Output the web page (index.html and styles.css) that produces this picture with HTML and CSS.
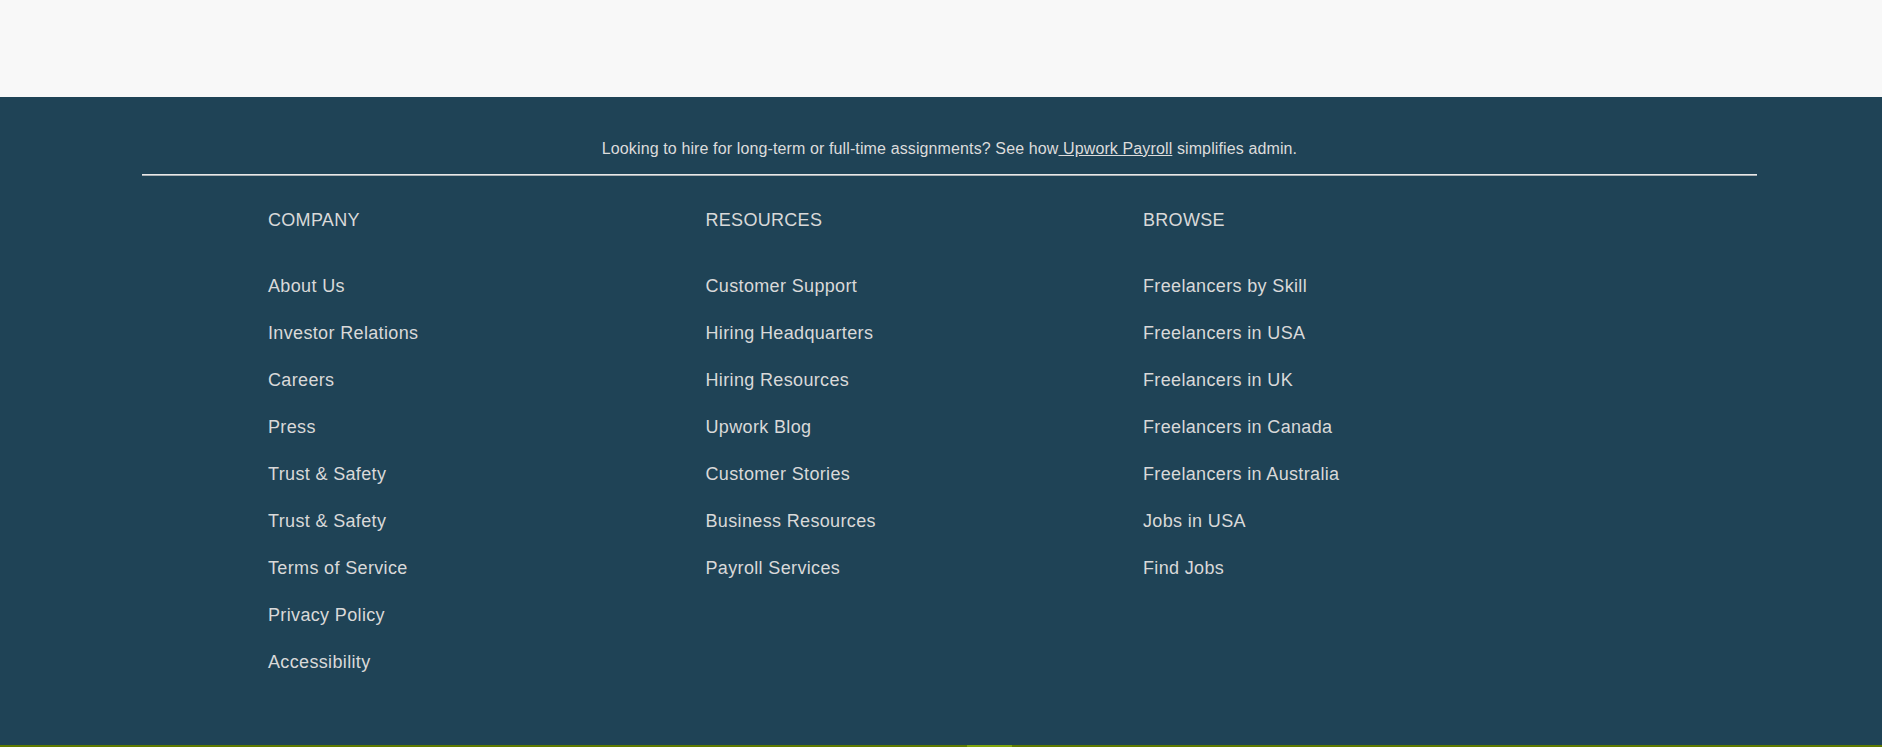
FILE: index.html
```html
<!DOCTYPE html>
<html lang="en">
<head>
<meta charset="utf-8">
<title>Footer</title>
<link rel="stylesheet" href="styles.css">
</head>
<body>
<div class="top-space"></div>
<footer class="footer">
  <div class="footer-inner">
    <p class="payroll-note">Looking to hire for long-term or full-time assignments? See how<a href="#" class="payroll-link"> Upwork Payroll</a> simplifies admin.</p>
    <div class="divider"></div>
    <div class="columns">
      <div class="col">
        <h3 class="col-title">COMPANY</h3>
        <ul class="links">
          <li><a href="#">About Us</a></li>
          <li><a href="#">Investor Relations</a></li>
          <li><a href="#">Careers</a></li>
          <li><a href="#">Press</a></li>
          <li><a href="#">Trust &amp; Safety</a></li>
          <li><a href="#">Trust &amp; Safety</a></li>
          <li><a href="#">Terms of Service</a></li>
          <li><a href="#">Privacy Policy</a></li>
          <li><a href="#">Accessibility</a></li>
        </ul>
      </div>
      <div class="col">
        <h3 class="col-title">RESOURCES</h3>
        <ul class="links">
          <li><a href="#">Customer Support</a></li>
          <li><a href="#">Hiring Headquarters</a></li>
          <li><a href="#">Hiring Resources</a></li>
          <li><a href="#">Upwork Blog</a></li>
          <li><a href="#">Customer Stories</a></li>
          <li><a href="#">Business Resources</a></li>
          <li><a href="#">Payroll Services</a></li>
        </ul>
      </div>
      <div class="col">
        <h3 class="col-title">BROWSE</h3>
        <ul class="links">
          <li><a href="#">Freelancers by Skill</a></li>
          <li><a href="#">Freelancers in USA</a></li>
          <li><a href="#">Freelancers in UK</a></li>
          <li><a href="#">Freelancers in Canada</a></li>
          <li><a href="#">Freelancers in Australia</a></li>
          <li><a href="#">Jobs in USA</a></li>
          <li><a href="#">Find Jobs</a></li>
        </ul>
      </div>
    </div>
  </div>
</footer>
<div class="bottom-bar"><span class="bar-highlight"></span></div>
</body>
</html>
```
FILE: styles.css
```css
* { box-sizing: border-box; }

html, body {
  margin: 0;
  padding: 0;
}

body {
  background: #f8f8f8;
  font-family: "Liberation Sans", Arial, sans-serif;
  color: #d9d9d9;
}

.top-space {
  height: 97px;
  background: #f8f8f8;
}

.footer {
  background: #1f4356;
  padding: 42px 0 72px;
}

.footer-inner {
  margin-left: 142px;
  width: 1615px;
}

.payroll-note {
  margin: 0;
  font-size: 16px;
  line-height: 20px;
  letter-spacing: 0.12px;
  text-align: center;
  color: #dcdcdc;
}

.payroll-link {
  color: #dcdcdc;
  text-decoration: underline;
}

.divider {
  margin-top: 15px;
  height: 2px;
  border-top: 1px solid #e8e8e8;
  border-bottom: 1px solid #a9b0b4;
}

.columns {
  display: grid;
  grid-template-columns: repeat(3, 437.5px);
  padding-left: 126px;
  margin-top: 33px;
}

.col-title {
  margin: 0;
  font-size: 18px;
  line-height: 22px;
  letter-spacing: 0.3px;
  font-weight: normal;
  color: #d9d9d9;
}

.links {
  list-style: none;
  margin: 44px 0 0;
  padding: 0;
  display: flex;
  flex-direction: column;
  gap: 25px;
}

.links li {
  font-size: 18px;
  line-height: 22px;
  letter-spacing: 0.35px;
}

.links a {
  color: #d9d9d9;
  text-decoration: none;
}

.bottom-bar {
  height: 4px;
  background: #5e7a00;
  display: flex;
}

.bar-highlight {
  margin-left: 967px;
  width: 45px;
  background: #7fa40c;
}
```
